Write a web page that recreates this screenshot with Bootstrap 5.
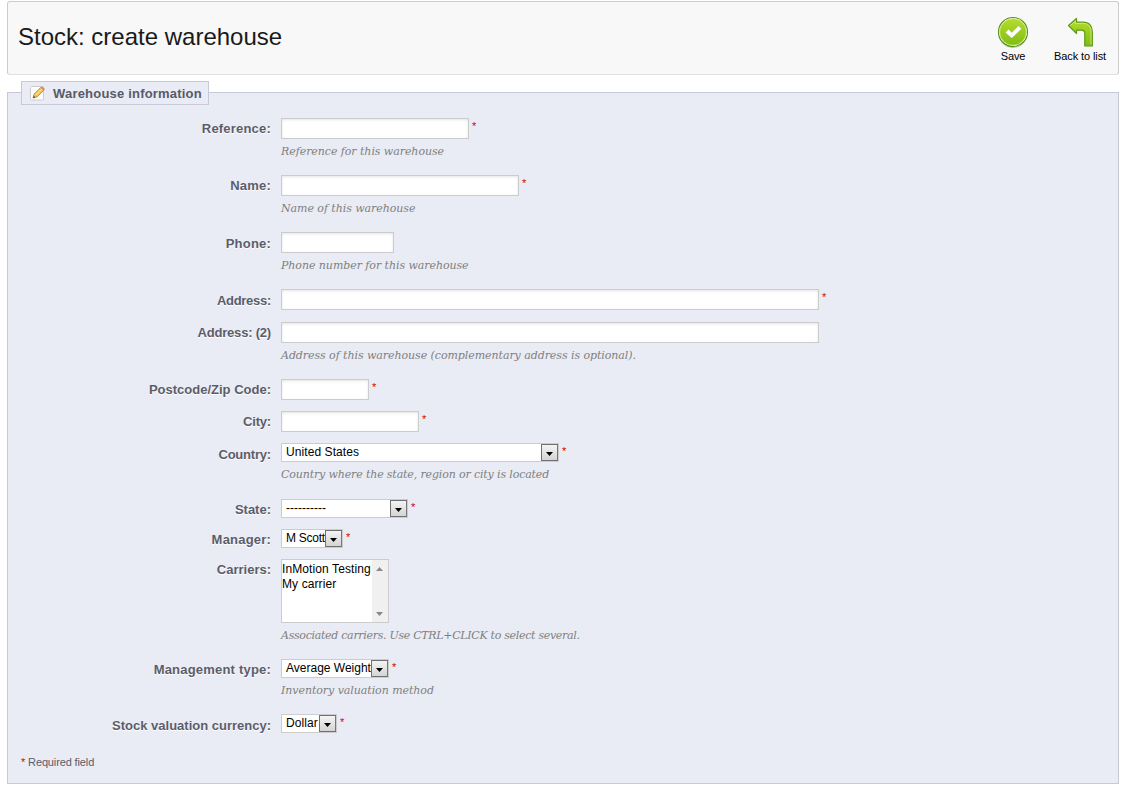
<!DOCTYPE html>
<html lang="en">
<head>
<meta charset="utf-8">
<title>Stock: create warehouse</title>
<link href="https://cdn.jsdelivr.net/npm/bootstrap@5.3.0/dist/css/bootstrap.min.css" rel="stylesheet">
<style>
body{font:12px/15px "Liberation Sans",Arial,sans-serif;color:#000;background:#fff;padding:1px 4px 0 7px;overflow:hidden}
.toolbar-box{height:74px;background:#f8f8f8;border:1px solid #ccc;border-bottom-color:#e0e0e0;border-radius:3px;padding:0 12px 0 10px}
.page-title{font-size:24px;line-height:28px;margin:-3px 0 0;font-weight:400;color:#1a1a1a}
.tool{font-size:11px;line-height:13px;color:#000;text-decoration:none;padding-top:14px;letter-spacing:-.1px}
.tool svg{display:block;margin-bottom:1px;margin-left:2px}
.tool-save{margin-right:25px}
.tool-save svg{margin-left:0}
.panel{margin-top:17px;height:692px;background:#e9ecf4;border:1px solid #c8c9d6;padding:0 13px}
.panel-legend{width:188px;height:24px;margin-top:-12px;margin-bottom:13px;background:#e9ecf4;border:1px solid #c8c9d6;padding-left:8px;font-size:13px;font-weight:700;color:#585a69;letter-spacing:.2px;white-space:nowrap}
.legend-icon{margin-right:7px}
.field-row{height:57px}
.field-label{width:250px;margin-right:10px;text-align:right;font-weight:700;font-size:13px;line-height:15px;padding-top:3px;color:#5b5d6b;text-shadow:0 1px 0 #fff;letter-spacing:.2px}
.low .field-label{padding-top:4px}
.ls-a{letter-spacing:-.28px}.ls-b{letter-spacing:-.2px}.ls-c{letter-spacing:0}
.h33{height:33px}.h32{height:32px}.h56{height:56px}.h30{height:30px}.h100{height:100px}.h55{height:55px}.h41{height:41px}
.text-input{display:block;height:21px;border:1px solid #ccc;background:#fff;box-shadow:inset 0 1px 3px #e4e4e4;border-radius:0;padding:0 4px;font-size:12px;outline:0}
.w188{width:188px}.w238{width:238px}.w113{width:113px}.w538{width:538px}.w88{width:88px}.w138{width:138px}
.req{color:#d80000;font-size:11px;line-height:13px;margin-left:3px;margin-top:2px}
.hint{font:italic 11px/15px "DejaVu Serif",Georgia,serif;color:#7f7f7f;margin-top:5px;white-space:nowrap;letter-spacing:-.06px}
.hint-snug{letter-spacing:-.14px}.hint-tight{letter-spacing:-.3px}
.pick{height:19px;border:1px solid #ccc;background:#fff;padding-left:4px;line-height:17px;white-space:nowrap}
.pick-btn{width:17px;height:17px;background:linear-gradient(#f4f4f4,#d4d4d4);border:1px solid #707070;border-right-color:#777;flex:none}
.pick-btn svg{display:block;margin:7px 0 0 4px}
.w278{width:278px;letter-spacing:.08px}.w127{width:127px}.w62{width:62px;letter-spacing:-.25px}.w108{width:108px}.w56{width:56px;letter-spacing:.1px}
.list-pick{width:108px;height:64px;border:1px solid #ccc;background:#fff;line-height:15px;white-space:nowrap;padding-top:2px;letter-spacing:.1px}
.scroller{width:16px;background:#f0f0f0;margin-top:-2px;padding:7px 0 6px 4px}
.required-note{font-size:11px;line-height:14px;color:#585a69;letter-spacing:-.13px}
.required-note span{color:#d80000}
</style>
</head>
<body>
<svg width="0" height="0" class="position-absolute"><defs>
<linearGradient id="green" x1="0" y1="0" x2="0" y2="1"><stop offset="0" stop-color="#b5dc2c"/><stop offset="1" stop-color="#80bd12"/></linearGradient>
<symbol id="down" viewBox="0 0 7 4"><path d="M0 0h7L3.5 4z"/></symbol>
</defs></svg>
<header class="toolbar-box d-flex justify-content-between">
  <h1 class="page-title align-self-center">Stock: create warehouse</h1>
  <div class="d-flex align-items-start">
    <a class="tool tool-save d-flex flex-column align-items-center"><svg width="32" height="33" viewBox="0 0 32 33"><circle cx="16" cy="17" r="14.6" fill="#fff" stroke="#999" stroke-width=".6"/><circle cx="16" cy="16" r="14.5" fill="#fff" stroke="#589411" stroke-width="1.1"/><circle cx="16" cy="16" r="13.3" fill="url(#green)" stroke="#c9e674" stroke-width=".8"/><path d="M8.500 16.500l3-3 3.300 3.200 6.700-6.700 2.800 2.800L14.800 22z" fill="#fff"/></svg>Save</a>
    <a class="tool d-flex flex-column align-items-center"><svg width="32" height="33" viewBox="0 0 32 33"><path d="M3.500 9.500L11.500 2.500v3.700H18c6 0 9.300 3.500 9.300 9.500V30h-7.500V17.500c0-2.200-1-3.300-3.300-3.300h-5V17.500z" fill="url(#green)" stroke="#5c9a14" stroke-width="1.200" stroke-linejoin="round"/><path d="M5.300 9.500l5.200-4.500V7.400h7.500c5 0 8 3 8 8.500V28.500" fill="none" stroke="#d4ec87" stroke-width=".8"/></svg>Back to list</a>
  </div>
</header>
<main class="panel">
  <div class="panel-legend d-flex align-items-center"><svg width="16" height="16" viewBox="0 0 16 16" class="legend-icon"><rect x=".5" y="1.500" width="13" height="13.500" rx="1" fill="#fdfdfd" stroke="#ccc"/><path d="M3 13l1.200-4L11 2.200 14 5 7 12z" fill="#f5c64f" stroke="#b57f24" stroke-width=".8"/><path d="M5.500 10.200l6.500-6.500" stroke="#ffe9a0"/><path d="M10.600 2.500L12 1.200l3 2.800-1.300 1.500z" fill="#d98b62"/><path d="M3 13l.8-2.300 1.500 1.600z" fill="#444"/></svg>Warehouse information</div>

  <div class="field-row d-flex"><label class="field-label">Reference:</label><div><div class="d-flex"><input class="text-input w188"><span class="req">*</span></div><div class="hint">Reference for this warehouse</div></div></div>
  <div class="field-row d-flex"><label class="field-label">Name:</label><div><div class="d-flex"><input class="text-input w238"><span class="req">*</span></div><div class="hint">Name of this warehouse</div></div></div>
  <div class="field-row low d-flex"><label class="field-label">Phone:</label><div><input class="text-input w113"><div class="hint">Phone number for this warehouse</div></div></div>
  <div class="field-row low h33 d-flex"><label class="field-label ls-a">Address:</label><div class="d-flex"><input class="text-input w538"><span class="req">*</span></div></div>
  <div class="field-row d-flex"><label class="field-label ls-b">Address: (2)</label><div><input class="text-input w538"><div class="hint">Address of this warehouse (complementary address is optional).</div></div></div>
  <div class="field-row h32 d-flex"><label class="field-label ls-c">Postcode/Zip Code:</label><div class="d-flex"><input class="text-input w88"><span class="req">*</span></div></div>
  <div class="field-row h32 d-flex"><label class="field-label ls-b">City:</label><div class="d-flex"><input class="text-input w138"><span class="req">*</span></div></div>

  <div class="field-row low h56 d-flex"><label class="field-label ls-b">Country:</label><div><div class="d-flex"><div class="pick w278 d-flex justify-content-between">United States<span class="pick-btn"><svg width="7" height="4"><use href="#down"/></svg></span></div><span class="req">*</span></div><div class="hint hint-snug">Country where the state, region or city is located</div></div></div>
  <div class="field-row h30 d-flex"><label class="field-label ls-c">State:</label><div class="d-flex"><div class="pick w127 d-flex justify-content-between">----------<span class="pick-btn"><svg width="7" height="4"><use href="#down"/></svg></span></div><span class="req">*</span></div></div>
  <div class="field-row h30 d-flex"><label class="field-label">Manager:</label><div class="d-flex"><div class="pick w62 d-flex justify-content-between">M Scott<span class="pick-btn"><svg width="7" height="4"><use href="#down"/></svg></span></div><span class="req">*</span></div></div>
  <div class="field-row h100 d-flex"><label class="field-label ls-c">Carriers:</label><div><div class="list-pick d-flex justify-content-between"><div>InMotion Testing<br>My carrier</div><div class="scroller d-flex flex-column justify-content-between"><svg width="7" height="4" viewBox="0 0 7 4"><path d="M0 4h7L3.500 0z" fill="#888"/></svg><svg width="7" height="4" fill="#888"><use href="#down"/></svg></div></div><div class="hint hint-tight">Associated carriers. Use CTRL+CLICK to select several.</div></div></div>
  <div class="field-row h55 d-flex"><label class="field-label">Management type:</label><div><div class="d-flex"><div class="pick w108 d-flex justify-content-between">Average Weight<span class="pick-btn"><svg width="7" height="4"><use href="#down"/></svg></span></div><span class="req">*</span></div><div class="hint">Inventory valuation method</div></div></div>
  <div class="field-row low h41 d-flex"><label class="field-label ls-c">Stock valuation currency:</label><div class="d-flex"><div class="pick w56 d-flex justify-content-between">Dollar<span class="pick-btn"><svg width="7" height="4"><use href="#down"/></svg></span></div><span class="req">*</span></div></div>
  <div class="required-note"><span>*</span> Required field</div>
</main>
<script src="https://cdn.jsdelivr.net/npm/bootstrap@5.3.0/dist/js/bootstrap.bundle.min.js"></script>
</body>
</html>
